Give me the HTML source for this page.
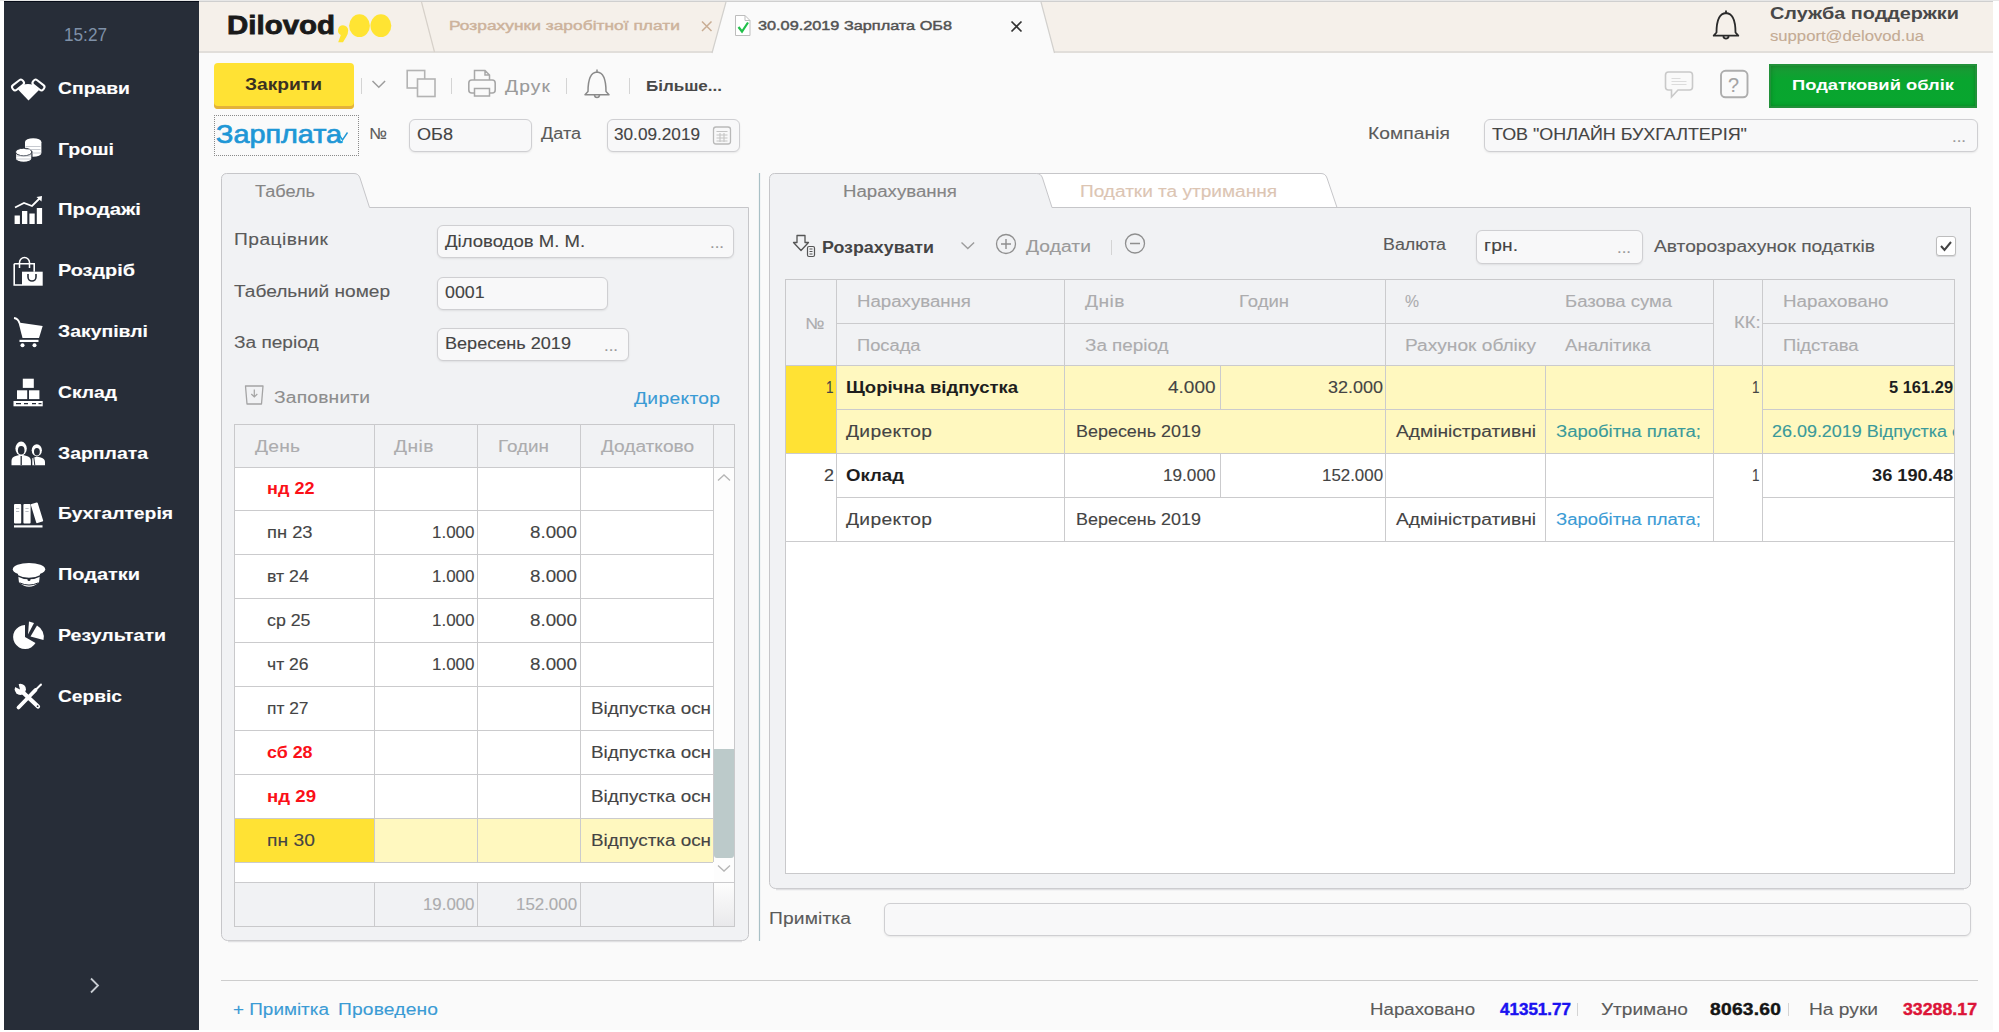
<!DOCTYPE html>
<html lang="uk"><head>
<meta charset="utf-8">
<title>Dilovod - Зарплата ОБ8</title>
<style>
*{box-sizing:border-box;margin:0;padding:0}
html,body{width:1999px;height:1032px;overflow:hidden;background:#fff}
body{position:relative;font-family:"Liberation Sans","DejaVu Sans",sans-serif;font-size:16px;color:#444}
.abs,.t,.box,.ln{position:absolute}
.t{-webkit-text-stroke:0.12px;white-space:nowrap;transform-origin:0 50%;line-height:20px;height:20px;margin-top:-10px}
.b{font-weight:bold;-webkit-text-stroke:0}
.sb{-webkit-text-stroke:0.45px currentColor}
.xb{-webkit-text-stroke:0.4px currentColor}
#app{position:absolute;left:4px;top:1px;width:1989px;height:1028.500px;background:#fafafa;overflow:hidden}
#side{position:absolute;left:4px;top:1px;width:195px;height:1028.500px;background:#272d38;border-top:1px solid #070c18}
#topstrip{position:absolute;left:0;top:0;width:1999px;height:1px;background:#e7e7e7}
#tabbar{position:absolute;left:199px;top:1px;width:1794px;height:52px;background:#f5f0ea;border-bottom:2px solid #e1deda;border-top:1px solid #cfcfcf}
.mi{color:#fff;font-weight:bold;font-size:17px}
.inp{position:absolute;background:#f8f8f9;border:1px solid #cfcfd2;border-radius:6px;box-shadow:0 1px 2px rgba(0,0,0,.08)}
.panel{position:absolute;background:#f1f2f4;border:1px solid #c9c9cc}
.sep{position:absolute;width:1px;background:#d4d4d4}
.hl{position:absolute;height:1px;background:#cbcbcd}
.vl{position:absolute;width:1px;background:#cbcbcd}
.g{color:#acacae}
.lbl{color:#5a5a5a}
.lnk{color:#3a9bd5}
svg{position:absolute;overflow:visible}
</style>
</head>
<body>
<div id="topstrip"></div>
<div id="app"></div>
<div id="side"></div>
<div id="tabbar"></div>
<!--SIDEBAR-->
<span class="t" style="left: 64px; top: 35px; font-size: 19px; color: rgb(127, 145, 168); -webkit-text-stroke: 0px; line-height: 24px; height: 24px; margin-top: -12px; transform: scaleX(0.904);">15:27</span>
<span class="t mi" style="left: 57.5px; top: 89px; transform: scaleX(1.137);">Справи</span>
<span class="t mi" style="left: 57.5px; top: 150px; transform: scaleX(1.151);">Гроші</span>
<span class="t mi" style="left: 57.5px; top: 210px; transform: scaleX(1.189);">Продажі</span>
<span class="t mi" style="left: 57.5px; top: 271px; transform: scaleX(1.168);">Роздріб</span>
<span class="t mi" style="left: 57.5px; top: 332px; transform: scaleX(1.142);">Закупівлі</span>
<span class="t mi" style="left: 57.5px; top: 393px; transform: scaleX(1.134);">Склад</span>
<span class="t mi" style="left: 57.5px; top: 454px; transform: scaleX(1.142);">Зарплата</span>
<span class="t mi" style="left: 57.5px; top: 514px; transform: scaleX(1.136);">Бухгалтерія</span>
<span class="t mi" style="left: 57.5px; top: 575px; transform: scaleX(1.173);">Податки</span>
<span class="t mi" style="left: 57.5px; top: 636px; transform: scaleX(1.15);">Результати</span>
<span class="t mi" style="left: 57.5px; top: 697px; transform: scaleX(1.128);">Сервіс</span>
<svg style="left:0;top:0" width="200" height="1032" viewBox="0 0 200 1032" fill="#fff" stroke="none">
<!-- handshake -->
<g>
<rect x="-3" y="-6.5" width="6" height="13" rx="2.5" fill="none" stroke="#fff" stroke-width="2" transform="translate(18,85) rotate(52)"></rect>
<rect x="-3" y="-6.5" width="6" height="13" rx="2.5" fill="none" stroke="#fff" stroke-width="2" transform="translate(38.500,85) rotate(-52)"></rect>
<path d="M18 89.500 L23 84.800 Q28 83.200 33 84.800 L39 90 L28.500 100.500 Z"></path>
</g>
<!-- coins -->
<g>
<path d="M25 142 v11 a8.2 3.8 0 0 0 16.4 0 v-11 z"></path>
<ellipse cx="33.2" cy="142" rx="8.2" ry="3.8"></ellipse>
<path d="M15.5 152 v6.5 a8.2 3.8 0 0 0 16.4 0 v-6.5 z" stroke="#272d38" stroke-width="1.2"></path>
<ellipse cx="23.7" cy="152" rx="8.2" ry="3.8" stroke="#272d38" stroke-width="1"></ellipse>
<path d="M25.5 146.5h15M25.5 149.5h15M32 153h9M16 156h15M16 159h15" stroke="#b9bdc4" stroke-width=".8" fill="none"></path>
</g>
<!-- chart -->
<g>
<rect x="14.6" y="215.5" width="5.3" height="8.5"></rect>
<rect x="22" y="211" width="5.3" height="13"></rect>
<rect x="29.4" y="213.5" width="5.3" height="10.5"></rect>
<rect x="36.8" y="208" width="5.3" height="16"></rect>
<path d="M15 207.5 L24 203 L32 206 L40 198" fill="none" stroke="#fff" stroke-width="1.8"></path>
<path d="M36.5 197 L42 196 L41.5 201.5 Z"></path>
</g>
<!-- bag -->
<g>
<path d="M14.2 263.8 h20 v8 M14.2 263.8 v21.2 h8" fill="none" stroke="#fff" stroke-width="1.6"></path>
<path d="M19.5 268 v-5.5 a5 5 0 0 1 10 0 v5.5" fill="none" stroke="#fff" stroke-width="1.5"></path>
<rect x="22" y="271.7" width="20.7" height="14"></rect>
<path d="M28 274 v3 a4 4 0 0 0 8 0 v-3" fill="none" stroke="#272d38" stroke-width="1.6"></path>
</g>
<!-- cart -->
<g>
<path d="M14 318 q4 0.5 5.5 5" fill="none" stroke="#fff" stroke-width="2"></path>
<path d="M18.5 322.5 L42.7 326 L39 338 L22.5 338 Z"></path>
<rect x="19.5" y="339.8" width="19" height="2.2"></rect>
<circle cx="22.5" cy="345.2" r="2"></circle>
<circle cx="34.5" cy="345.2" r="2"></circle>
</g>
<!-- boxes -->
<g>
<rect x="22.8" y="378.7" width="11" height="9.2"></rect>
<rect x="17" y="390.3" width="10.2" height="8.8"></rect>
<rect x="29" y="390.3" width="10.4" height="8.8"></rect>
<rect x="13.5" y="401" width="29.2" height="5.3"></rect>
<path d="M16 403.6h5M24 403.6h4M32 403.6h4M38.5 403.6h3" stroke="#272d38" stroke-width="1.3"></path>
</g>
<!-- people -->
<g>
<path d="M11.500 465.300 v-4.500 q0 -4 5 -5 l4.700 -1.200 l4.700 1.200 q5 1 5 5 v4.500 z"></path>
<ellipse cx="21.100" cy="448.600" rx="5.700" ry="7"></ellipse>
<ellipse cx="21.200" cy="450.300" rx="3.300" ry="4.300" fill="#272d38"></ellipse>
<path d="M21.200 456 v9" stroke="#272d38" stroke-width="1.300"></path>
<path d="M32.300 465.300 v-7 l4.500 -1.800 l4 1 q4.200 1 4.200 4.500 v3.300 z"></path>
<ellipse cx="36.800" cy="450.200" rx="5.100" ry="6"></ellipse>
<ellipse cx="36.900" cy="451.700" rx="2.900" ry="3.700" fill="#272d38"></ellipse>
<path d="M33.800 457.500 l1 7.800" stroke="#272d38" stroke-width="1"></path>
</g>
<!-- books -->
<g>
<rect x="14" y="504" width="7.2" height="19.5" rx="1"></rect>
<rect x="23.4" y="504" width="7.2" height="19.5" rx="1"></rect>
<rect x="-3.6" y="-10" width="7.2" height="20" rx="1" transform="translate(37,512.8) rotate(-17)"></rect>
<rect x="14" y="525.3" width="28.5" height="2.2"></rect>
<path d="M16 508.5h3.2M16 511.5h3.2M25.4 508.5h3.2M25.4 511.5h3.2" stroke="#b9bdc4" stroke-width="1"></path>
</g>
<!-- cap -->
<g>
<ellipse cx="29" cy="569.200" rx="16.200" ry="6.300"></ellipse>
<path d="M18 574 h22 l-1 8.500 q-10 8.500 -20 0 z"></path>
<path d="M16.500 575.300 q12.500 6.500 25 0" fill="none" stroke="#272d38" stroke-width="1.500"></path>
<path d="M19.500 582.800 q9.500 4.500 19 0" fill="none" stroke="#272d38" stroke-width="1"></path>
<circle cx="29" cy="579.600" r="1.500" fill="#272d38"></circle>
</g>
<!-- pie -->
<g>
<path d="M25 637 L25 625 A12 12 0 1 0 35.5 643 Z"></path>
<path d="M28 634.5 L29 621.5 L34 623 Z"></path>
<path d="M30.5 636.5 L37 625.5 A13 13 0 0 1 43.5 640 Z"></path>
</g>
<!-- tools -->
<g>
<path d="M18.500 707.500 L35.500 690" stroke="#fff" stroke-width="3.800" stroke-linecap="round" fill="none"></path>
<path d="M34.500 691 L41 684.500" stroke="#fff" stroke-width="1.900" stroke-linecap="round" fill="none"></path>
<path d="M22 691.500 L38 706.500" stroke="#fff" stroke-width="4.200" stroke-linecap="round" fill="none"></path>
<circle cx="20.300" cy="689.300" r="5.600"></circle>
<path d="M20 689.500 L12 685.500 L17.500 679.500 Z" fill="#272d38"></path>
<circle cx="37.600" cy="706.200" r="0.900" fill="#272d38"></circle>
</g>
<!-- chevron -->
<path d="M91 978.5 L98 985.5 L91 992.5" fill="none" stroke="#c8ccd2" stroke-width="1.8"></path>
</svg>
<!--/SIDEBAR-->
<!--TOPBAR-->
<span class="t b" style="left: 227px; top: 25px; font-size: 26px; color: rgb(26, 26, 26); -webkit-text-stroke: 0.8px rgb(26, 26, 26); line-height: 30px; height: 30px; margin-top: -15px; transform: scaleX(1.133);">Dilovod</span>
<svg style="left:0;top:0" width="1999" height="60" viewBox="0 0 1999 60">
<ellipse cx="359.500" cy="25.700" rx="10.400" ry="11.400" fill="#ffe433"></ellipse>
<ellipse cx="380.900" cy="25.700" rx="10.400" ry="11.400" fill="#ffe433"></ellipse>
<path d="M343 25.300 a5.200 5.200 0 0 1 5.200 5.200 q0 3 -2 6.500 l-3.200 5.300 h-4.800 l2.600 -7.200 a5.200 5.200 0 0 1 2.200 -9.800 z" fill="#ffe433"></path>
<path d="M421.500 2 L434.500 52" stroke="#d6d0c9" stroke-width="1.2" fill="none"></path>
<path d="M712 53.500 L726 2 L1041 2 L1054.500 53.500 Z" fill="#fafafa"></path>
<path d="M712 53 L726 2 M1041 2 L1054.500 53" stroke="#d2d0cd" stroke-width="1.2" fill="none"></path>
<path d="M726 1.500 H1041" stroke="#cfcfcf" stroke-width="1" fill="none"></path>
<path d="M702 21.500 l9.500 9.500 m0 -9.500 l-9.500 9.500" stroke="#c9ad94" stroke-width="1.5" fill="none"></path>
<path d="M1011.500 21.500 l10 10 m0 -10 l-10 10" stroke="#333" stroke-width="1.700" fill="none"></path>
<path d="M735.500 15.500 h9.500 l5 5 v15 h-14.500 z" fill="#fff" stroke="#bdbdbd" stroke-width="1"></path>
<path d="M745 15.500 v5 h5" fill="none" stroke="#bdbdbd" stroke-width="1"></path>
<path d="M738.500 27 l3.500 4.500 l6 -9" fill="none" stroke="#21c04a" stroke-width="2.200"></path>
<path d="M1726 10.500 v2.500 M1716.500 32.500 q0 -19 9.500 -19.500 q9.500 0.500 9.500 19.500 l2.800 3.200 h-24.600 z M1723.300 36.500 a2.800 2.800 0 0 0 5.400 0" fill="none" stroke="#2a2a2a" stroke-width="1.800" stroke-linejoin="round"></path>
</svg>
<span class="t sb" style="left: 449px; top: 26px; font-size: 13.5px; color: rgb(205, 179, 156); letter-spacing: 0.04px; transform: scaleX(1.28);">Розрахунки заробітної плати</span>
<span class="t sb" style="left: 758px; top: 26px; font-size: 13.5px; color: rgb(82, 82, 82); transform: scaleX(1.205);">30.09.2019 Зарплата ОБ8</span>
<span class="t b" style="left: 1770px; top: 14px; font-size: 17px; color: rgb(72, 72, 72); transform: scaleX(1.167);">Служба поддержки</span>
<span class="t" style="left: 1770px; top: 36px; font-size: 14.5px; color: rgb(196, 171, 148); transform: scaleX(1.149);">support@delovod.ua</span>
<!--/TOPBAR-->
<!--TOOLBAR-->
<div class="abs" style="left:214px;top:63px;width:140px;height:46px;border-radius:4px;background:#ffe234;box-shadow:inset 0 -3px 0 #e3b23a"></div>
<span class="t b" style="left: 245px; top: 83.5px; font-size: 16.5px; color: rgb(58, 49, 34); transform: scaleX(1.163);">Закрити</span>
<div class="sep" style="left:361px;top:78px;height:16px"></div>
<div class="sep" style="left:451px;top:78px;height:16px"></div>
<div class="sep" style="left:566px;top:78px;height:16px"></div>
<div class="sep" style="left:629px;top:78px;height:16px"></div>
<span class="t" style="left: 505px; top: 87px; color: rgb(154, 154, 154); letter-spacing: 0.98px; transform: scaleX(1.2);">Друк</span>
<span class="t b" style="left: 646px; top: 86px; font-size: 15.5px; color: rgb(72, 72, 72); transform: scaleX(1.097);">Більше...</span>
<svg style="left:0;top:55px" width="1999" height="60" viewBox="0 55 1999 60" fill="none">
<path d="M372.500 81 l6.300 6.300 l6.300 -6.300" stroke="#9c9c9c" stroke-width="1.500"></path>
<rect x="407.200" y="70.500" width="17.500" height="17.500" stroke="#b3b3b3" stroke-width="1.600" fill="#fafafa"></rect>
<rect x="417.500" y="79" width="17.500" height="17.500" stroke="#b3b3b3" stroke-width="1.600" fill="#fafafa"></rect>
<!-- printer -->
<path d="M474.500 80 v-9.500 h10.500 l4.500 4.500 v5 M485 70.500 v4.500 h4.500" stroke="#a8a8a8" stroke-width="1.500"></path>
<rect x="468.800" y="80" width="26.400" height="13" rx="3" stroke="#a8a8a8" stroke-width="1.600"></rect>
<rect x="474.500" y="88.500" width="15" height="7.500" stroke="#a8a8a8" stroke-width="1.500" fill="#fafafa"></rect>
<!-- bell -->
<path d="M597 69.500 v2.500 M588 91.500 q0 -19 9 -19.500 q9 0.500 9 19.500 l3 3.200 h-24 z M594.400 95.500 a2.700 2.700 0 0 0 5.200 0" stroke="#8a8a8a" stroke-width="1.500" stroke-linejoin="round"></path>
<!-- chat -->
<path d="M1668.500 72 h21 a3 3 0 0 1 3 3 v12 a3 3 0 0 1 -3 3 h-11.500 l-6.500 7 v-7 h-3 a3 3 0 0 1 -3 -3 v-12 a3 3 0 0 1 3 -3 z" stroke="#c9c9c9" stroke-width="1.600"></path>
<path d="M1671.500 78.500 h9 M1671.500 81.500 h15 M1671.500 84.500 h15" stroke="#dcdcdc" stroke-width="1.200"></path>
<rect x="1721" y="70.800" width="26.500" height="26.500" rx="4.500" stroke="#adadad" stroke-width="1.900"></rect>
</svg>
<span class="t" style="left: 1728px; top: 84.5px; font-size: 20px; color: rgb(163, 163, 163); transform: scaleX(0.989);">?</span>
<div class="abs" style="left:1769px;top:64px;width:208px;height:44px;background:linear-gradient(#1c9836,#09a52f 35%,#08a62f);border:2px solid #22913a;box-shadow:inset 0 0 4px rgba(0,60,0,.3)"></div>
<span class="t b" style="left: 1792px; top: 84.5px; font-size: 15.5px; color: rgb(255, 255, 255); transform: scaleX(1.183);">Податковий облік</span>
<div class="abs" style="left:214px;top:115px;width:145px;height:41px;border:1px dotted #8a8a8a"></div>
<span class="t" style="left: 216px; top: 133.5px; font-size: 26px; color: rgb(31, 151, 214); line-height: 30px; height: 30px; margin-top: -15px; -webkit-text-stroke: 0.7px rgb(31, 151, 214); transform: scaleX(1.107);">Зарплата</span>
<svg style="left:335px;top:125px" width="16" height="20" viewBox="335 125 16 20" fill="none"><path d="M339 134.500 l3.500 5.500 l5 -7.500" stroke="#1f97d6" stroke-width="1.400"></path></svg>
<span class="t lbl" style="left: 369px; top: 133.5px; transform: scaleX(1.048);">№</span>
<div class="inp" style="left:409px;top:119px;width:123px;height:33px"></div>
<span class="t" style="left: 416.5px; top: 135px; transform: scaleX(1.131);">ОБ8</span>
<span class="t lbl" style="left: 541px; top: 133.5px; transform: scaleX(1.129);">Дата</span>
<div class="inp" style="left:607px;top:119px;width:133px;height:33px"></div>
<span class="t" style="left: 614px; top: 135px; transform: scaleX(1.074);">30.09.2019</span>
<svg style="left:710px;top:124px" width="24" height="24" viewBox="710 124 24 24" fill="none"><rect x="713.500" y="127" width="17" height="17" rx="2.500" stroke="#b9b9b9" stroke-width="1.300"></rect><path d="M716.500 131.500 h11 M716.500 135 h11 M716.500 138 h11 M716.500 141 h11 M720 133 v9 M724 133 v9" stroke="#c4c4c4" stroke-width="1.100"></path></svg>
<span class="t lbl" style="left: 1368px; top: 133.5px; letter-spacing: 0.07px; transform: scaleX(1.2);">Компанія</span>
<div class="inp" style="left:1484px;top:119px;width:494px;height:33px"></div>
<span class="t" style="left: 1492px; top: 135px; transform: scaleX(1.119);">ТОВ "ОНЛАЙН БУХГАЛТЕРІЯ"</span>
<span class="t" style="left: 1952px; top: 137px; color: rgb(154, 154, 154); transform: scaleX(1.049);">...</span>
<!--/TOOLBAR-->
<!--LEFTPANEL-->
<svg style="left:0;top:0" width="1999" height="1032" viewBox="0 0 1999 1032" fill="none">
<path d="M221.500 934.500 V178.500 a5 5 0 0 1 5 -5 H354 q4.500 0 6 4.500 L369.500 207.500 H748.500 V934.500 a6 6 0 0 1 -6 6 H227.500 a6 6 0 0 1 -6 -6 Z" fill="#f1f2f4" stroke="#c6c6c9" stroke-width="1"></path>
<path d="M228 941.500 H742" stroke="#e0e0e2" stroke-width="1.500"></path>
<path d="M759.500 173 V941" stroke="#a9c0c6" stroke-width="1.200"></path>
</svg>
<span class="t" style="left: 254.5px; top: 192px; color: rgb(133, 133, 133); transform: scaleX(1.132);">Табель</span>
<span class="t lbl" style="left: 234px; top: 240px; letter-spacing: 0.38px; transform: scaleX(1.2);">Працівник</span>
<span class="t lbl" style="left: 234px; top: 291.5px; transform: scaleX(1.194);">Табельний номер</span>
<span class="t lbl" style="left: 234px; top: 343px; transform: scaleX(1.192);">За період</span>
<div class="inp" style="left:437px;top:225px;width:297px;height:33px"></div>
<div class="inp" style="left:437px;top:277px;width:171px;height:33px"></div>
<div class="inp" style="left:437px;top:328px;width:192px;height:33px"></div>
<span class="t" style="left: 444.5px; top: 241.5px; transform: scaleX(1.159);">Діловодов М. М.</span>
<span class="t" style="left: 710px; top: 243px; color: rgb(154, 154, 154); transform: scaleX(1.049);">...</span>
<span class="t" style="left: 444.5px; top: 292.5px; transform: scaleX(1.11);">0001</span>
<span class="t" style="left: 444.5px; top: 344px; transform: scaleX(1.13);">Вересень 2019</span>
<span class="t" style="left: 604px; top: 346px; color: rgb(154, 154, 154); transform: scaleX(1.049);">...</span>
<svg style="left:240px;top:380px" width="30" height="30" viewBox="240 380 30 30" fill="none"><path d="M245.500 386 h17.500 l-1.500 18 h-14.500 z" stroke="#a4a4a4" stroke-width="1.300" stroke-linejoin="round"></path><path d="M254.300 389.500 v7 M251.300 394 l3 3 l3 -3" stroke="#a4a4a4" stroke-width="1.200"></path></svg>
<span class="t" style="left: 273.5px; top: 397.5px; color: rgb(141, 141, 141); letter-spacing: 0.17px; transform: scaleX(1.2);">Заповнити</span>
<span class="t lnk" style="left: 633.5px; top: 398.5px; letter-spacing: 0.28px; transform: scaleX(1.2);">Директор</span>
<div class="abs" style="left:234px;top:424px;width:501px;height:503px;background:#fff;border:1px solid #c9c9cb"></div>
<div class="abs" style="left:235px;top:425px;width:499px;height:42px;background:#f1f2f4"></div>
<div class="abs" style="left:235px;top:819px;width:139px;height:43px;background:#ffe234"></div>
<div class="abs" style="left:374px;top:819px;width:339px;height:43px;background:#fff8bf"></div>
<div class="abs" style="left:714px;top:468px;width:20px;height:414px;background:#fdfdfd"></div>
<div class="abs" style="left:714px;top:749px;width:20px;height:109px;background:#bccaca;border-radius:0 0 3px 3px"></div>
<div class="abs" style="left:235px;top:883px;width:499px;height:43px;background:#f1f2f4"></div>
<div class="abs" style="left:714px;top:883px;width:20px;height:43px;background:linear-gradient(#fdfdfd,#e9e9eb)"></div>
<div class="hl" style="left:234px;top:467px;width:500px"></div>
<div class="hl" style="left:234px;top:510px;width:479px"></div>
<div class="hl" style="left:234px;top:554px;width:479px"></div>
<div class="hl" style="left:234px;top:598px;width:479px"></div>
<div class="hl" style="left:234px;top:642px;width:479px"></div>
<div class="hl" style="left:234px;top:686px;width:479px"></div>
<div class="hl" style="left:234px;top:730px;width:479px"></div>
<div class="hl" style="left:234px;top:774px;width:479px"></div>
<div class="hl" style="left:234px;top:818px;width:479px"></div>
<div class="hl" style="left:234px;top:862px;width:479px"></div>
<div class="hl" style="left:234px;top:882px;width:500px"></div>
<div class="vl" style="left:374px;top:424px;height:438px"></div>
<div class="vl" style="left:374px;top:882px;height:44px"></div>
<div class="vl" style="left:477px;top:424px;height:438px"></div>
<div class="vl" style="left:477px;top:882px;height:44px"></div>
<div class="vl" style="left:580px;top:424px;height:438px"></div>
<div class="vl" style="left:580px;top:882px;height:44px"></div>
<div class="vl" style="left:713px;top:424px;height:438px"></div>
<div class="vl" style="left:713px;top:882px;height:44px"></div>
<span class="t g" style="left: 254.5px; top: 446.5px; letter-spacing: 0.2px; transform: scaleX(1.2);">День</span>
<span class="t g" style="left: 394px; top: 446.5px; letter-spacing: 0.39px; transform: scaleX(1.2);">Днів</span>
<span class="t g" style="left: 497.5px; top: 446.5px; transform: scaleX(1.179);">Годин</span>
<span class="t g" style="left: 600.5px; top: 446.5px; transform: scaleX(1.191);">Додатково</span>
<span class="t b" style="left: 267px; top: 489px; color: rgb(251, 16, 24); transform: scaleX(1.129);">нд 22</span>
<span class="t" style="left: 267px; top: 532.5px; transform: scaleX(1.145);">пн 23</span>
<span class="t" style="left: 432px; top: 532.5px; transform: scaleX(1.061);">1.000</span>
<span class="t" style="left: 530px; top: 532.5px; transform: scaleX(1.174);">8.000</span>
<span class="t" style="left: 267px; top: 576.5px; transform: scaleX(1.106);">вт 24</span>
<span class="t" style="left: 432px; top: 576.5px; transform: scaleX(1.061);">1.000</span>
<span class="t" style="left: 530px; top: 576.5px; transform: scaleX(1.174);">8.000</span>
<span class="t" style="left: 267px; top: 620.5px; transform: scaleX(1.111);">ср 25</span>
<span class="t" style="left: 432px; top: 620.5px; transform: scaleX(1.061);">1.000</span>
<span class="t" style="left: 530px; top: 620.5px; transform: scaleX(1.174);">8.000</span>
<span class="t" style="left: 267px; top: 664.5px; transform: scaleX(1.095);">чт 26</span>
<span class="t" style="left: 432px; top: 664.5px; transform: scaleX(1.061);">1.000</span>
<span class="t" style="left: 530px; top: 664.5px; transform: scaleX(1.174);">8.000</span>
<span class="t" style="left: 267px; top: 708.5px; transform: scaleX(1.085);">пт 27</span>
<span class="t" style="left: 591px; top: 708.5px; transform: scaleX(1.179);">Відпустка осн</span>
<span class="t b" style="left: 267px; top: 752.5px; color: rgb(251, 16, 24); transform: scaleX(1.115);">сб 28</span>
<span class="t" style="left: 591px; top: 752.5px; transform: scaleX(1.179);">Відпустка осн</span>
<span class="t b" style="left: 267px; top: 796.5px; color: rgb(251, 16, 24); transform: scaleX(1.165);">нд 29</span>
<span class="t" style="left: 591px; top: 796.5px; transform: scaleX(1.179);">Відпустка осн</span>
<span class="t" style="left: 267px; top: 840.5px; letter-spacing: 0.06px; transform: scaleX(1.2);">пн 30</span>
<span class="t" style="left: 591px; top: 840.5px; transform: scaleX(1.179);">Відпустка осн</span>
<span class="t g" style="left: 422.5px; top: 905px; transform: scaleX(1.052);">19.000</span>
<span class="t g" style="left: 516px; top: 905px; transform: scaleX(1.055);">152.000</span>
<svg style="left:713px;top:467px" width="22" height="416" viewBox="713 467 22 416" fill="none"><path d="M718 480.500 l6 -5.500 l6 5.500 M718 865.500 l6 5.500 l6 -5.500" stroke="#b5b5b5" stroke-width="1.300"></path></svg>
<!--/LEFTPANEL-->
<!--RIGHTPANEL-->
<svg style="left:0;top:0" width="1999" height="1032" viewBox="0 0 1999 1032" fill="none">
<path d="M1036 207.500 L1036 173.500 H1321 q4.500 0 6 4.500 L1337 207.500 Z" fill="#fff" stroke="#c6c6c9" stroke-width="1"></path>
<path d="M769.500 882.500 V178.500 a5 5 0 0 1 5 -5 H1036.500 q4.500 0 6 4.500 L1052 207.500 H1970.500 V882.500 a6 6 0 0 1 -6 6 H775.500 a6 6 0 0 1 -6 -6 Z" fill="#f1f2f4" stroke="#c6c6c9" stroke-width="1"></path>
<path d="M776 889.500 H1964" stroke="#e0e0e2" stroke-width="1.500"></path>
</svg>
<span class="t" style="left: 843px; top: 192px; color: rgb(133, 133, 133); transform: scaleX(1.165);">Нарахування</span>
<span class="t" style="left: 1080px; top: 192px; color: rgb(220, 197, 179); transform: scaleX(1.19);">Податки та утримання</span>
<svg style="left:785px;top:228px" width="400" height="36" viewBox="785 228 400 36" fill="none"><path d="M797 235.500 h8 v7 h3.500 l-7.500 8 l-7.500 -8 h3.500 z" stroke="#555" stroke-width="1.300" stroke-linejoin="round"></path><rect x="807.500" y="246.500" width="7" height="10" rx="1.500" stroke="#555" stroke-width="1.200" fill="#f1f2f4"></rect><path d="M809.500 249 h3 M809.500 251.500 h3 M809.500 254 h3" stroke="#555" stroke-width="1"></path><path d="M961.500 242.500 l6.300 6 l6.300 -6" stroke="#9c9c9c" stroke-width="1.400"></path><circle cx="1006" cy="244" r="9.500" stroke="#8f8f8f" stroke-width="1.300"></circle><path d="M1001 244 h10 M1006 239 v10" stroke="#8f8f8f" stroke-width="1.400"></path><circle cx="1135" cy="243.500" r="9.500" stroke="#8f8f8f" stroke-width="1.300"></circle><path d="M1130 243.500 h10" stroke="#8f8f8f" stroke-width="1.500"></path></svg>
<span class="t b" style="left: 822px; top: 247.5px; color: rgb(68, 68, 68); transform: scaleX(1.113);">Розрахувати</span>
<span class="t" style="left: 1026px; top: 246.5px; color: rgb(154, 154, 154); letter-spacing: 0.09px; transform: scaleX(1.2);">Додати</span>
<div class="sep" style="left:1111px;top:240px;height:15px"></div>
<span class="t lbl" style="left: 1383px; top: 245px; transform: scaleX(1.113);">Валюта</span>
<div class="inp" style="left:1476px;top:230px;width:167px;height:34px"></div>
<span class="t" style="left: 1484px; top: 246px; letter-spacing: 0.11px; transform: scaleX(1.2);">грн.</span>
<span class="t" style="left: 1617px; top: 248px; color: rgb(154, 154, 154); transform: scaleX(1.049);">...</span>
<span class="t lbl" style="left: 1654px; top: 247px; transform: scaleX(1.199);">Авторозрахунок податків</span>
<div class="abs" style="left:1936px;top:236px;width:20px;height:20px;background:#fff;border:1px solid #bdbdbd;border-radius:3px;box-shadow:0 1px 1px rgba(0,0,0,.12)"></div>
<svg style="left:1936px;top:236px" width="20" height="20" viewBox="0 0 20 20" fill="none"><path d="M5 10 l3.500 4 l6.500 -8" stroke="#444" stroke-width="2"></path></svg>
<div class="abs" style="left:785px;top:279px;width:1170px;height:595px;background:#fff;border:1px solid #c9c9cb"></div>
<div class="abs" style="left:786px;top:280px;width:1168px;height:85px;background:#f1f2f4"></div>
<div class="abs" style="left:786px;top:366px;width:50px;height:87px;background:#ffe234"></div>
<div class="abs" style="left:836px;top:366px;width:1118px;height:87px;background:#fff8bf"></div>
<div class="hl" style="left:836px;top:323px;width:877px"></div>
<div class="hl" style="left:1762px;top:323px;width:192px"></div>
<div class="hl" style="left:785px;top:365px;width:1169px"></div>
<div class="hl" style="left:836px;top:409px;width:877px"></div>
<div class="hl" style="left:1762px;top:409px;width:192px"></div>
<div class="hl" style="left:785px;top:453px;width:1169px"></div>
<div class="hl" style="left:836px;top:497px;width:877px"></div>
<div class="hl" style="left:1762px;top:497px;width:192px"></div>
<div class="hl" style="left:785px;top:541px;width:1169px"></div>
<div class="vl" style="left:836px;top:279px;height:262px"></div>
<div class="vl" style="left:1064px;top:279px;height:262px"></div>
<div class="vl" style="left:1385px;top:279px;height:262px"></div>
<div class="vl" style="left:1713px;top:279px;height:262px"></div>
<div class="vl" style="left:1762px;top:279px;height:262px"></div>
<div class="vl" style="left:1220px;top:365px;height:44px"></div>
<div class="vl" style="left:1220px;top:453px;height:44px"></div>
<div class="vl" style="left:1545px;top:365px;height:176px"></div>
<span class="t g" style="left: 805px; top: 323.5px; transform: scaleX(1.136);">№</span>
<span class="t g" style="left: 857px; top: 302px; transform: scaleX(1.165);">Нарахування</span>
<span class="t g" style="left: 857px; top: 345.5px; transform: scaleX(1.144);">Посада</span>
<span class="t g" style="left: 1085px; top: 302px; letter-spacing: 0.39px; transform: scaleX(1.2);">Днів</span>
<span class="t g" style="left: 1239px; top: 302px; transform: scaleX(1.156);">Годин</span>
<span class="t g" style="left: 1085px; top: 345.5px; transform: scaleX(1.178);">За період</span>
<span class="t g" style="left: 1405px; top: 302px; transform: scaleX(0.984);">%</span>
<span class="t g" style="left: 1564.5px; top: 302px; transform: scaleX(1.155);">Базова сума</span>
<span class="t g" style="left: 1405px; top: 345.5px; transform: scaleX(1.195);">Рахунок обліку</span>
<span class="t g" style="left: 1565px; top: 345.5px; transform: scaleX(1.165);">Аналітика</span>
<span class="t g" style="left: 1782.5px; top: 302px; transform: scaleX(1.173);">Нараховано</span>
<span class="t g" style="left: 1782.5px; top: 345.5px; transform: scaleX(1.15);">Підстава</span>
<div class="abs" style="left:1714px;top:310px;width:48px;height:26px;overflow:hidden"><span class="t g" style="left: 19.5px; top: 13px; transform: scaleX(1.147);">КК:</span></div>
<span class="t" style="left: 826px; top: 388px; transform: scaleX(0.842);">1</span>
<span class="t b" style="left: 846px; top: 388px; color: rgb(30, 30, 30); transform: scaleX(1.156);">Щорічна відпустка</span>
<span class="t" style="left: 1167.5px; top: 388px; transform: scaleX(1.186);">4.000</span>
<span class="t" style="left: 1327.5px; top: 388px; transform: scaleX(1.124);">32.000</span>
<span class="t" style="left: 1752px; top: 388px; transform: scaleX(0.842);">1</span>
<span class="t b" style="left: 1888.5px; top: 388px; color: rgb(30, 30, 30); transform: scaleX(1.028);">5 161.29</span>
<span class="t" style="left: 846px; top: 431.5px; letter-spacing: 0.28px; transform: scaleX(1.2);">Директор</span>
<span class="t" style="left: 1075.5px; top: 431.5px; transform: scaleX(1.121);">Вересень 2019</span>
<span class="t" style="left: 1395.5px; top: 431.5px; transform: scaleX(1.198);">Адміністративні</span>
<span class="t" style="left: 1555.5px; top: 431.5px; color: rgb(58, 154, 154); transform: scaleX(1.154);">Заробітна плата;</span>
<div class="abs" style="left:1763px;top:420px;width:191px;height:24px;overflow:hidden"><span class="t" style="left: 9px; top: 11.5px; color: rgb(58, 154, 154); transform: scaleX(1.121);">26.09.2019 Відпустка о</span></div>
<span class="t" style="left: 823.5px; top: 476px; transform: scaleX(1.123);">2</span>
<span class="t b" style="left: 846px; top: 476px; color: rgb(30, 30, 30); transform: scaleX(1.163);">Оклад</span>
<span class="t" style="left: 1162.5px; top: 476px; transform: scaleX(1.073);">19.000</span>
<span class="t" style="left: 1321.5px; top: 476px; transform: scaleX(1.055);">152.000</span>
<span class="t" style="left: 1752px; top: 476px; transform: scaleX(0.842);">1</span>
<span class="t b" style="left: 1871.5px; top: 476px; color: rgb(30, 30, 30); transform: scaleX(1.138);">36 190.48</span>
<span class="t" style="left: 846px; top: 519.5px; letter-spacing: 0.28px; transform: scaleX(1.2);">Директор</span>
<span class="t" style="left: 1075.5px; top: 519.5px; transform: scaleX(1.121);">Вересень 2019</span>
<span class="t" style="left: 1395.5px; top: 519.5px; transform: scaleX(1.198);">Адміністративні</span>
<span class="t lnk" style="left: 1555.5px; top: 519.5px; transform: scaleX(1.154);">Заробітна плата;</span>
<span class="t lbl" style="left: 769px; top: 919px; letter-spacing: 0.12px; transform: scaleX(1.2);">Примітка</span>
<div class="inp" style="left:884px;top:903px;width:1087px;height:33px"></div>
<!--/RIGHTPANEL-->
<!--FOOTER-->
<div class="hl" style="left:221px;top:980px;width:1757px;background:#cdcdcd"></div>
<span class="t lnk" style="left: 233px; top: 1009.5px; font-size: 16px; transform: scaleX(1.181);">+ Примітка</span>
<span class="t lnk" style="left: 338px; top: 1009.5px; font-size: 16px; letter-spacing: 0.15px; transform: scaleX(1.2);">Проведено</span>
<span class="t lbl" style="left: 1370px; top: 1009.5px; font-size: 16px; transform: scaleX(1.168);">Нараховано</span>
<span class="t b xb" style="left: 1500px; top: 1009.5px; font-size: 16px; color: rgb(26, 18, 240); transform: scaleX(1.064);">41351.77</span>
<span class="t lbl" style="left: 1601px; top: 1009.5px; font-size: 16px; transform: scaleX(1.192);">Утримано</span>
<span class="t b xb" style="left: 1710px; top: 1009.5px; font-size: 16px; color: rgb(20, 20, 20); letter-spacing: 0.22px; transform: scaleX(1.2);">8063.60</span>
<span class="t lbl" style="left: 1809px; top: 1009.5px; font-size: 16px; transform: scaleX(1.199);">На руки</span>
<span class="t b xb" style="left: 1903px; top: 1009.5px; font-size: 16px; color: rgb(220, 20, 56); transform: scaleX(1.109);">33288.17</span>
<div class="sep" style="left:1577px;top:1003px;height:13px"></div><div class="sep" style="left:1788px;top:1003px;height:13px"></div>
<!--/FOOTER-->


</body></html>
